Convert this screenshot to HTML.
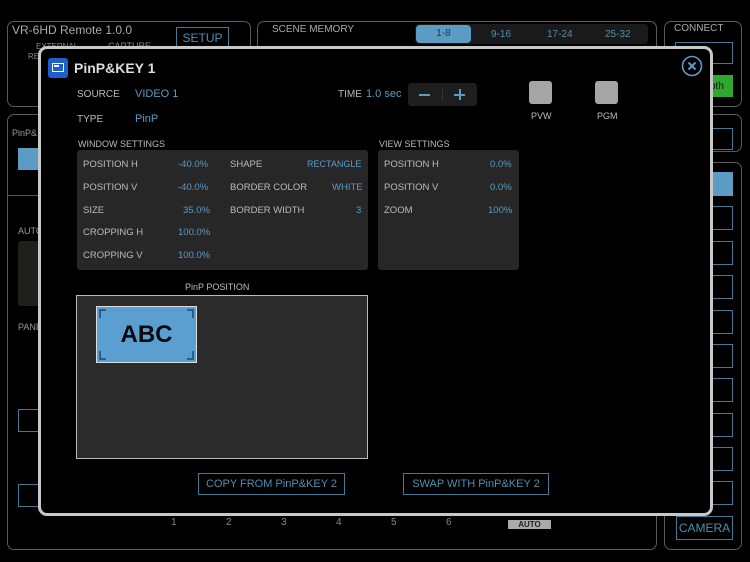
<!DOCTYPE html>
<html><head><meta charset="utf-8"><style>
*{margin:0;padding:0;box-sizing:border-box}
body{width:750px;height:562px;background:#000;position:relative;overflow:hidden;font-family:"Liberation Sans",sans-serif;color:#bbb}
.a{position:absolute}
.pan{position:absolute;border:1.5px solid #5a5a5a;border-radius:7px}
.ob{position:absolute;border:1.5px solid #3f7a96;color:#4f8fb0;font-size:11px;text-align:center}
.t{position:absolute;font-size:10px;color:#bbb;white-space:nowrap}
.v{position:absolute;font-size:10px;color:#5b9bc4;white-space:nowrap}
.box{position:absolute;background:#272727;border-radius:3px}
</style></head><body>
<div class="pan" style="left:7px;top:21px;width:244px;height:86px"></div>
<div class="t" style="left:12px;top:23px;font-size:12px;color:#aaa">VR-6HD Remote 1.0.0</div>
<div class="t" style="left:36px;top:42px;font-size:8px;color:#888">EXTERNAL</div>
<div class="t" style="left:108px;top:41px;font-size:9px;color:#888">CAPTURE</div>
<div class="t" style="left:28px;top:52px;font-size:8px;color:#888">RE</div>
<div class="ob" style="left:176px;top:27px;width:53px;height:22px;line-height:20px;font-size:12px">SETUP</div>
<div class="pan" style="left:257px;top:21px;width:400px;height:40px"></div>
<div class="t" style="left:272px;top:24px;color:#aaa">SCENE MEMORY</div>
<div class="a" style="left:415px;top:24px;width:233px;height:20px;background:#1a1a1a;border-radius:4px"></div>
<div class="a" style="left:416px;top:25px;width:55px;height:18px;background:#5b9bc4;border-radius:4px;font-size:10px;color:#1d3a4e;text-align:center;line-height:18px">1-8</div>
<div class="t" style="left:491px;top:29px;color:#4f8fb0">9-16</div>
<div class="t" style="left:547px;top:29px;color:#4f8fb0">17-24</div>
<div class="t" style="left:605px;top:29px;color:#4f8fb0">25-32</div>
<div class="pan" style="left:664px;top:21px;width:78px;height:86px"></div>
<div class="t" style="left:674px;top:23px;color:#aaa">CONNECT</div>
<div class="ob" style="left:675px;top:42px;width:58px;height:22px"></div>
<div class="a" style="left:675px;top:75px;width:58px;height:22px;background:#2ea82e"></div>
<div class="t" style="left:710px;top:81px;color:#111">oth</div>
<div class="pan" style="left:7px;top:114px;width:650px;height:436px"></div>
<div class="t" style="left:12px;top:128px;font-size:9px;color:#999">PinP&amp;</div>
<div class="a" style="left:18px;top:148px;width:30px;height:22px;background:#5b9bc4"></div>
<div class="a" style="left:8px;top:195px;width:40px;height:1px;background:#555"></div>
<div class="t" style="left:18px;top:226px;font-size:9px;color:#999">AUTO</div>
<div class="a" style="left:18px;top:241px;width:25px;height:65px;background:#1f1f1c;border-radius:3px"></div>
<div class="t" style="left:18px;top:322px;font-size:9px;color:#999">PANE</div>
<div class="ob" style="left:18px;top:409px;width:30px;height:23px"></div>
<div class="ob" style="left:18px;top:484px;width:30px;height:23px"></div>
<div class="t" style="left:171px;top:517px;color:#888">1</div>
<div class="t" style="left:226px;top:517px;color:#888">2</div>
<div class="t" style="left:281px;top:517px;color:#888">3</div>
<div class="t" style="left:336px;top:517px;color:#888">4</div>
<div class="t" style="left:391px;top:517px;color:#888">5</div>
<div class="t" style="left:446px;top:517px;color:#888">6</div>
<div class="a" style="left:508px;top:520px;width:43px;height:9px;background:#aaa;font-size:8px;font-weight:bold;color:#222;text-align:center;line-height:9px">AUTO</div>
<div class="pan" style="left:664px;top:114px;width:78px;height:38px"></div>
<div class="ob" style="left:675px;top:128px;width:58px;height:22px"></div>
<div class="pan" style="left:664px;top:162px;width:78px;height:388px"></div>
<div class="a" style="left:676px;top:172px;width:57px;height:24px;background:#5b9bc4"></div>
<div class="ob" style="left:676px;top:206px;width:57px;height:24px"></div>
<div class="ob" style="left:676px;top:241px;width:57px;height:24px"></div>
<div class="ob" style="left:676px;top:275px;width:57px;height:24px"></div>
<div class="ob" style="left:676px;top:310px;width:57px;height:24px"></div>
<div class="ob" style="left:676px;top:344px;width:57px;height:24px"></div>
<div class="ob" style="left:676px;top:378px;width:57px;height:24px"></div>
<div class="ob" style="left:676px;top:413px;width:57px;height:24px"></div>
<div class="ob" style="left:676px;top:447px;width:57px;height:24px"></div>
<div class="ob" style="left:676px;top:481px;width:57px;height:24px"></div>
<div class="ob" style="left:676px;top:516px;width:57px;height:24px;line-height:22px;font-size:12px">CAMERA</div>
<svg class="a" style="left:686px;top:262px" width="20" height="40"><path d="M1 1 L19 20 L1 39Z" fill="#3aa83a"/></svg>
<div class="a" style="left:38px;top:46px;width:675px;height:470px;background:#000;border:3px solid #c8c8c8;border-radius:9px"></div>
<div class="a" style="left:48px;top:58px;width:20px;height:20px;background:#1f5fcc;border-radius:3px"></div>
<div class="a" style="left:52px;top:63px;width:12px;height:9px;border:1.5px solid #fff"></div>
<div class="a" style="left:54px;top:65px;width:5px;height:2px;background:#fff"></div>
<div class="t" style="left:74px;top:60px;font-size:14px;font-weight:bold;color:#ddd">PinP&amp;KEY 1</div>
<svg class="a" style="left:681px;top:55px" width="22" height="22"><circle cx="11" cy="11" r="9.5" fill="none" stroke="#5b9bc4" stroke-width="1.6"/><path d="M7.5 7.5L14.5 14.5M14.5 7.5L7.5 14.5" stroke="#5b9bc4" stroke-width="2"/></svg>
<div class="t" style="left:77px;top:89px">SOURCE</div>
<div class="v" style="left:135px;top:88px;font-size:11px">VIDEO 1</div>
<div class="t" style="left:77px;top:114px">TYPE</div>
<div class="v" style="left:135px;top:113px;font-size:11px">PinP</div>
<div class="t" style="left:338px;top:89px">TIME</div>
<div class="v" style="left:366px;top:88px;font-size:11px">1.0 sec</div>
<div class="a" style="left:408px;top:83px;width:69px;height:23px;background:#1e1e1e;border-radius:3px"></div>
<div class="a" style="left:442px;top:88px;width:1px;height:13px;background:#333"></div>
<div class="a" style="left:419px;top:94px;width:11px;height:1.5px;background:#5b9bc4"></div>
<div class="a" style="left:454px;top:94px;width:11px;height:1.5px;background:#5b9bc4"></div>
<div class="a" style="left:459px;top:89px;width:1.5px;height:11px;background:#5b9bc4"></div>
<div class="a" style="left:529px;top:81px;width:23px;height:23px;background:#a5a5a5;border-radius:3px"></div>
<div class="a" style="left:595px;top:81px;width:23px;height:23px;background:#a5a5a5;border-radius:3px"></div>
<div class="t" style="left:531px;top:111px;font-size:9px">PVW</div>
<div class="t" style="left:597px;top:111px;font-size:9px">PGM</div>
<div class="t" style="left:78px;top:139px;font-size:9px">WINDOW SETTINGS</div>
<div class="t" style="left:379px;top:139px;font-size:9px">VIEW SETTINGS</div>
<div class="box" style="left:77px;top:150px;width:291px;height:120px"></div>
<div class="box" style="left:378px;top:150px;width:141px;height:120px"></div>
<div class="t" style="left:83px;top:159px;font-size:9.5px">POSITION H</div><div class="v" style="left:178px;top:159px;font-size:9.5px">-40.0%</div>
<div class="t" style="left:83px;top:182px;font-size:9.5px">POSITION V</div><div class="v" style="left:178px;top:182px;font-size:9.5px">-40.0%</div>
<div class="t" style="left:83px;top:205px;font-size:9.5px">SIZE</div><div class="v" style="left:183px;top:205px;font-size:9.5px">35.0%</div>
<div class="t" style="left:83px;top:227px;font-size:9.5px">CROPPING H</div><div class="v" style="left:178px;top:227px;font-size:9.5px">100.0%</div>
<div class="t" style="left:83px;top:250px;font-size:9.5px">CROPPING V</div><div class="v" style="left:178px;top:250px;font-size:9.5px">100.0%</div>
<div class="t" style="left:230px;top:159px;font-size:9.5px">SHAPE</div><div class="v" style="left:307px;top:159px;font-size:9px">RECTANGLE</div>
<div class="t" style="left:230px;top:182px;font-size:9.5px">BORDER COLOR</div><div class="v" style="left:332px;top:182px;font-size:9.5px">WHITE</div>
<div class="t" style="left:230px;top:205px;font-size:9.5px">BORDER WIDTH</div><div class="v" style="left:356px;top:205px;font-size:9.5px">3</div>
<div class="t" style="left:384px;top:159px;font-size:9.5px">POSITION H</div><div class="v" style="left:490px;top:159px;font-size:9.5px">0.0%</div>
<div class="t" style="left:384px;top:182px;font-size:9.5px">POSITION V</div><div class="v" style="left:490px;top:182px;font-size:9.5px">0.0%</div>
<div class="t" style="left:384px;top:205px;font-size:9.5px">ZOOM</div><div class="v" style="left:488px;top:205px;font-size:9.5px">100%</div>
<div class="t" style="left:185px;top:282px;font-size:9px">PinP POSITION</div>
<div class="a" style="left:76px;top:295px;width:292px;height:164px;background:#2b2b2b;border:1.5px solid #bbb"></div>
<div class="a" style="left:96px;top:306px;width:101px;height:57px;background:#5b9fd0;border:1.5px solid #ddd"></div>
<svg class="a" style="left:98px;top:308px" width="97" height="53" fill="none" stroke="#1d4a6e" stroke-width="1.5"><path d="M2 10V2H8M89 2H95V10M2 43V51H8M89 51H95V43"/></svg>
<div class="a" style="left:96px;top:321px;width:101px;text-align:center;font-size:24px;font-weight:bold;color:#0a0a0a">ABC</div>
<div class="ob" style="left:198px;top:473px;width:147px;height:22px;line-height:20px">COPY FROM PinP&amp;KEY 2</div>
<div class="ob" style="left:403px;top:473px;width:146px;height:22px;line-height:20px">SWAP WITH PinP&amp;KEY 2</div>
</body></html>
